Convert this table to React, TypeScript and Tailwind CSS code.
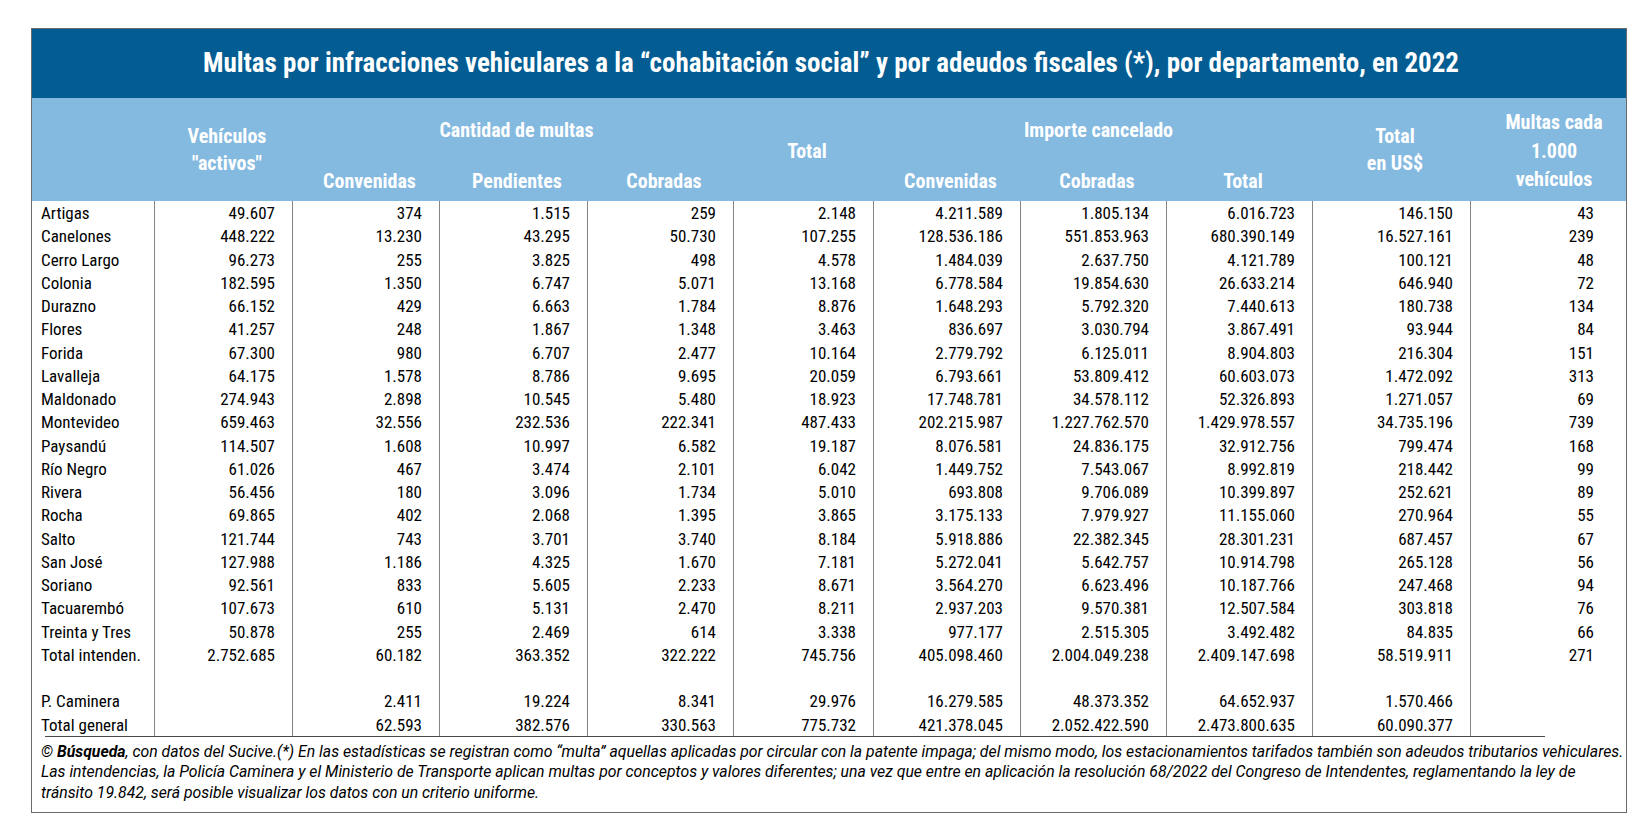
import React from "react";

const rows: (string[] | null)[] = [
  ["Artigas", "49.607", "374", "1.515", "259", "2.148", "4.211.589", "1.805.134", "6.016.723", "146.150", "43"],
  ["Canelones", "448.222", "13.230", "43.295", "50.730", "107.255", "128.536.186", "551.853.963", "680.390.149", "16.527.161", "239"],
  ["Cerro Largo", "96.273", "255", "3.825", "498", "4.578", "1.484.039", "2.637.750", "4.121.789", "100.121", "48"],
  ["Colonia", "182.595", "1.350", "6.747", "5.071", "13.168", "6.778.584", "19.854.630", "26.633.214", "646.940", "72"],
  ["Durazno", "66.152", "429", "6.663", "1.784", "8.876", "1.648.293", "5.792.320", "7.440.613", "180.738", "134"],
  ["Flores", "41.257", "248", "1.867", "1.348", "3.463", "836.697", "3.030.794", "3.867.491", "93.944", "84"],
  ["Forida", "67.300", "980", "6.707", "2.477", "10.164", "2.779.792", "6.125.011", "8.904.803", "216.304", "151"],
  ["Lavalleja", "64.175", "1.578", "8.786", "9.695", "20.059", "6.793.661", "53.809.412", "60.603.073", "1.472.092", "313"],
  ["Maldonado", "274.943", "2.898", "10.545", "5.480", "18.923", "17.748.781", "34.578.112", "52.326.893", "1.271.057", "69"],
  ["Montevideo", "659.463", "32.556", "232.536", "222.341", "487.433", "202.215.987", "1.227.762.570", "1.429.978.557", "34.735.196", "739"],
  ["Paysandú", "114.507", "1.608", "10.997", "6.582", "19.187", "8.076.581", "24.836.175", "32.912.756", "799.474", "168"],
  ["Río Negro", "61.026", "467", "3.474", "2.101", "6.042", "1.449.752", "7.543.067", "8.992.819", "218.442", "99"],
  ["Rivera", "56.456", "180", "3.096", "1.734", "5.010", "693.808", "9.706.089", "10.399.897", "252.621", "89"],
  ["Rocha", "69.865", "402", "2.068", "1.395", "3.865", "3.175.133", "7.979.927", "11.155.060", "270.964", "55"],
  ["Salto", "121.744", "743", "3.701", "3.740", "8.184", "5.918.886", "22.382.345", "28.301.231", "687.457", "67"],
  ["San José", "127.988", "1.186", "4.325", "1.670", "7.181", "5.272.041", "5.642.757", "10.914.798", "265.128", "56"],
  ["Soriano", "92.561", "833", "5.605", "2.233", "8.671", "3.564.270", "6.623.496", "10.187.766", "247.468", "94"],
  ["Tacuarembó", "107.673", "610", "5.131", "2.470", "8.211", "2.937.203", "9.570.381", "12.507.584", "303.818", "76"],
  ["Treinta y Tres", "50.878", "255", "2.469", "614", "3.338", "977.177", "2.515.305", "3.492.482", "84.835", "66"],
  ["Total intenden.", "2.752.685", "60.182", "363.352", "322.222", "745.756", "405.098.460", "2.004.049.238", "2.409.147.698", "58.519.911", "271"],
  null,
  ["P. Caminera", "", "2.411", "19.224", "8.341", "29.976", "16.279.585", "48.373.352", "64.652.937", "1.570.466", ""],
  ["Total general", "", "62.593", "382.576", "330.563", "775.732", "421.378.045", "2.052.422.590", "2.473.800.635", "60.090.377", ""],
];

const COLS = "grid-cols-[122px_138px_147px_148px_146px_140px_147px_146px_146px_158px_156px]";
const FONT = { fontFamily: '"Roboto Condensed", "Liberation Sans Narrow", Roboto, sans-serif', fontStretch: "75%" } as React.CSSProperties;
const FOOT = { fontFamily: 'Roboto, "Liberation Sans", sans-serif', fontStretch: "100%" } as React.CSSProperties;

export default function App() {
  return (
    <div className="w-[1643px] h-[829px] bg-white pt-[28px] pl-[31px]" style={FONT}>
      <div className="w-[1596px] border border-[#6a6a6a] flex flex-col">
        {/* title */}
        <div className="h-[69px] bg-[#035d93] flex items-center justify-center pl-[4px] text-white font-bold text-[27px] leading-none">
          Multas por infracciones vehiculares a la “cohabitación social” y por adeudos fiscales (*), por departamento, en 2022
        </div>
        {/* header */}
        <div className={`grid ${COLS} h-[103px] bg-[#84b9e0] text-white font-bold text-[20px]`}>
          <div />
          <div className="pt-[25px] pl-[8px] text-center leading-[27px]">
            Vehículos
            <br />
            "activos"
          </div>
          <div className="col-span-3 flex flex-col">
            <div className="pt-[20px] pl-[8px] text-center leading-[24px]">Cantidad de multas</div>
            <div className="grid grid-cols-[147px_148px_146px] mt-auto pb-[8px] leading-[24px]">
              <div className="pl-[8px] text-center">Convenidas</div>
              <div className="pl-[8px] text-center">Pendientes</div>
              <div className="pl-[8px] text-center">Cobradas</div>
            </div>
          </div>
          <div className="pt-[41px] pl-[8px] text-center leading-[24px]">Total</div>
          <div className="col-span-3 flex flex-col">
            <div className="pt-[20px] pl-[12px] text-center leading-[24px]">Importe cancelado</div>
            <div className="grid grid-cols-[147px_146px_146px] mt-auto pb-[8px] leading-[24px]">
              <div className="pl-[8px] text-center">Convenidas</div>
              <div className="pl-[8px] text-center">Cobradas</div>
              <div className="pl-[8px] text-center">Total</div>
            </div>
          </div>
          <div className="pt-[25px] pl-[8px] text-center leading-[27px]">
            Total
            <br />
            en US$
          </div>
          <div className="pt-[10px] pl-[12px] text-center leading-[28.5px]">
            Multas cada
            <br />
            1.000
            <br />
            vehículos
          </div>
        </div>
        {/* body */}
        <div className="flex flex-col text-[17px] text-black">
          {rows.map((r, i) => (
            <div key={i} className={`grid ${COLS} h-[23.26px] leading-[23.26px]`}>
              {Array.from({ length: 11 }).map((_, j) => (
                <div
                  key={j}
                  className={
                    j === 0
                      ? "pl-[9px] whitespace-nowrap pt-[1px]"
                      : j === 10
                      ? "border-l border-[#858585] text-right pr-[32px] whitespace-nowrap pt-[1px]"
                      : "border-l border-[#858585] text-right pr-[17px] whitespace-nowrap pt-[1px]"
                  }
                >
                  {r ? r[j] : ""}
                </div>
              ))}
            </div>
          ))}
        </div>
        <div className="ml-[13px] w-[1500px] h-px bg-[#4a4a4a]" />
        {/* footer */}
        <div className="h-[75px] pl-[9px] pt-[5px] italic text-[15.8px] leading-[20.5px] text-black whitespace-nowrap" style={FOOT}>
          © <span className="font-bold">Búsqueda</span>, con datos del Sucive.(*) En las estadísticas se registran como “multa” aquellas aplicadas por circular con la patente impaga; del mismo modo, los estacionamientos tarifados también son adeudos tributarios vehiculares.
          <br />
          Las intendencias, la Policía Caminera y el Ministerio de Transporte aplican multas por conceptos y valores diferentes; una vez que entre en aplicación la resolución 68/2022 del Congreso de Intendentes, reglamentando la ley de
          <br />
          tránsito 19.842, será posible visualizar los datos con un criterio uniforme.
        </div>
      </div>
    </div>
  );
}
